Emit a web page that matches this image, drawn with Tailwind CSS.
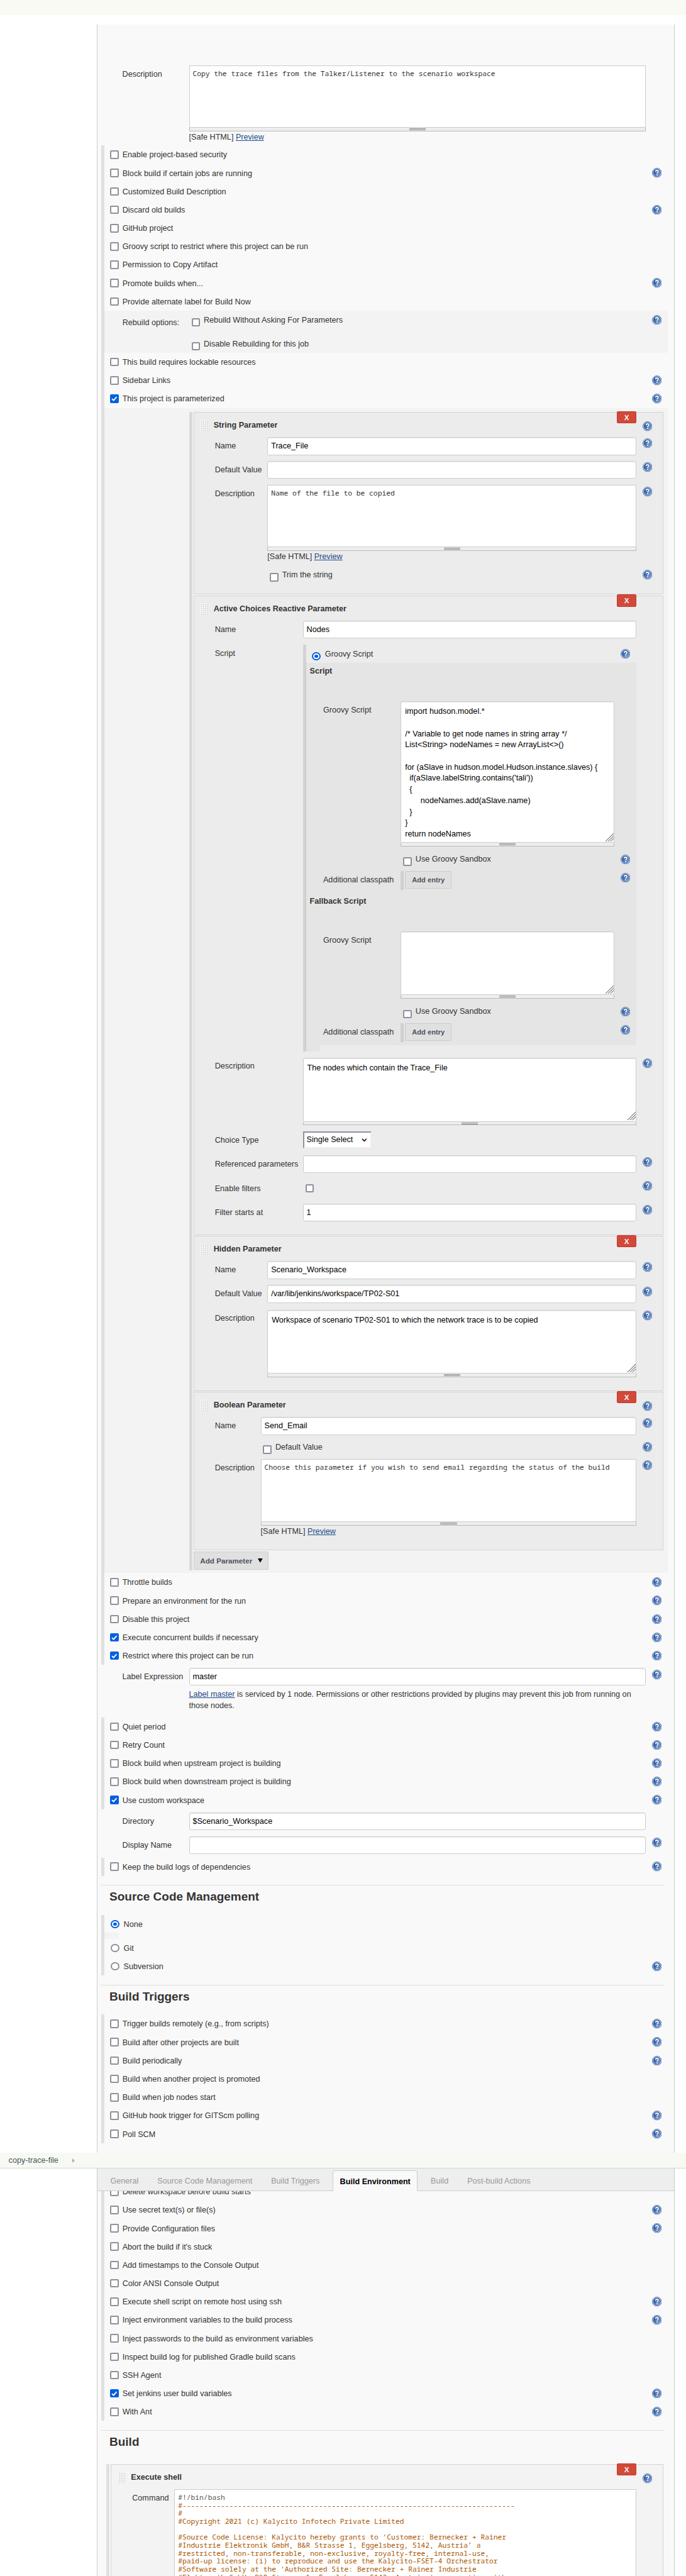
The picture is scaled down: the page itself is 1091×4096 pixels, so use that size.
<!DOCTYPE html>
<html lang="en">
<head>
<meta charset="utf-8">
<title>copy-trace-file Config</title>
<script src="https://cdn.jsdelivr.net/npm/@tailwindcss/browser@4"></script>
</head>
<body class="bg-white">
<svg class="absolute size-0">
  <defs>
    <linearGradient id="hg" x1="0" y1="0" x2="1" y2="1"><stop offset="0.1" stop-color="#24509a"/><stop offset="1" stop-color="#86a9da"/></linearGradient>
    <symbol id="help" viewBox="0 0 16 16">
      <circle cx="8" cy="8" r="7.5" fill="#fff" stroke="#3f68a6" stroke-width="1"/>
      <circle cx="8" cy="8" r="6.1" fill="url(#hg)" stroke="#2f5a9c" stroke-width="0.6"/>
      <path d="M5.9 6.1C5.9 4.7 6.8 4 8 4s2.1.8 2.1 1.9c0 1.5-1.9 1.7-1.9 3.4" fill="none" stroke="#fff" stroke-width="1.6"/>
      <rect x="7.3" y="10.5" width="1.8" height="1.7" fill="#fff"/>
    </symbol>
    <symbol id="tick" viewBox="0 0 14 14"><path d="M3.2 7.3l2.6 2.6 5-5.7" fill="none" stroke="#fff" stroke-width="1.9"/></symbol>
    <symbol id="resize" viewBox="0 0 15 15"><path d="M1 14.5L14.500 1M5 14.500L14.500 5M9 14.500L14.500 9" stroke="#777" stroke-width="1.100"/></symbol>
    <pattern id="dots" width="3" height="3" patternUnits="userSpaceOnUse"><rect width="3" height="3" fill="#fbfbfb"/><rect x="1" y="1" width="1.500" height="1.500" fill="#bcbcb6"/></pattern>
    <symbol id="grip" viewBox="0 0 12 18"><rect width="12" height="18" fill="url(#dots)"/></symbol>
  </defs>
</svg>
<div class="w-[1091px] h-[4096px] overflow-hidden">
  <div id="page" class="[zoom:0.9726] h-[4213px] flex flex-col font-['Liberation_Sans',Arial,sans-serif] text-[13px] leading-[18px] text-[#333]"></div>
</div>
<script>
const help = (mt = 'mt-[7px]') => `<svg class="size-4 shrink-0 ${mt}"><use href="#help"/></svg>`;
const box = (on, mt = '') => on
  ? `<svg class="size-[14px] shrink-0 rounded-[2px] bg-[#0060df] ${mt}"><use href="#tick"/></svg>`
  : `<div class="size-[14px] shrink-0 rounded-[2px] border-[2.1px] border-[#8f8f9d] bg-white ${mt}"></div>`;
const radio = (on, mt = '') => on
  ? `<div class="size-[14px] shrink-0 rounded-full border-[2.1px] border-[#0060df] bg-white p-[2px] ${mt}"><div class="size-full rounded-full bg-[#0060df]"></div></div>`
  : `<div class="size-[14px] shrink-0 rounded-full border-[2.1px] border-[#8f8f9d] bg-white ${mt}"></div>`;

// One 30px option row of the configuration form
const opt = (text, h = 0, on = 0) => `<div class="flex h-[30px] pl-[9px] pr-5">${box(on, 'mt-2')}<span class="ml-[6px] flex-1 leading-[31px]">${text}</span>${h ? help() : ''}</div>`;
const rad = (text, h = 0, on = 0) => `<div class="flex h-[30px] pl-[10px] pr-5">${radio(on, 'mt-2')}<span class="ml-[7px] flex-1 leading-[31px]">${text}</span>${h ? help() : ''}</div>`;
const group = (inner) => `<div class="ml-[7px] border-l-[5.15px] border-[#e0e0e0]">${inner}</div>`;

const input = (v = '') => `<div class="h-[29px] rounded-[3px] border border-[#ccc] bg-white px-[5px] leading-[28px] text-black shadow-[inset_0_1px_1px_rgba(0,0,0,0.08)]">${v}</div>`;
const handle = `<div class="flex h-[6px] flex-col items-center gap-px border border-t-0 border-[#bbb] bg-[#eee] pt-px"><div class="h-px w-[27px] bg-[#85857d]"></div><div class="h-px w-[27px] bg-[#85857d]"></div></div>`;
const mono = "font-['Noto_Sans_Mono','DejaVu_Sans_Mono',monospace] text-[11.63px] whitespace-pre";
const editor = (v) => `<div class="h-[102px] border border-[#ccc] bg-white px-[5px] pt-[6px] leading-[13px] ${mono}">${v}</div>${handle}`;
const area = (h, v = '') => `<div class="relative ${h} rounded-[3px] border border-[#ccc] bg-white px-[6px] pt-[7px] leading-[18.2px] whitespace-pre text-black shadow-[inset_0_1px_1px_rgba(0,0,0,0.08)]">${v}<svg class="absolute right-0 bottom-px size-[15px]"><use href="#resize"/></svg></div>${handle}`;
const safe = `<div class="h-5 leading-[20px]">[Safe HTML] <span class="text-[#204a87] underline">Preview</span></div>`;
const inlineCheck = (text, bm, tm, on) => `<div class="flex items-start pl-1">${box(on, bm)}<span class="ml-[6px] ${tm}">${text}</span></div>`;

const field = ({ h, pad = 'pl-[34px] pr-[17px]', lw, label = '', lh = 'leading-[29px]', ctrl, hm }) =>
  `<div class="flex items-start ${h} ${pad}"><div class="${lw} ${lh} shrink-0 whitespace-nowrap">${label}</div><div class="min-w-0 flex-1">${ctrl}</div><div class="ml-[10px] flex w-4 shrink-0">${hm ? help(hm) : ''}</div></div>`;

const card = (h, bg, title, hasHelp, inner) => `<div class="relative ${h} ${bg} border border-[#d3d3d3]">
  <div class="absolute right-[43px] -top-[3px] h-5 w-8 rounded-[2px] border border-[#c0392b] bg-[#d24939] text-center text-[12px] leading-[18px] font-bold text-[#f4f4f4]">X</div>
  <div class="flex h-10 items-start pl-[11px] pr-[17px]"><svg class="mt-3 h-[18px] w-3"><use href="#grip"/></svg><b class="ml-[9px] mt-3 flex-1">${title}</b>${hasHelp ? help('mt-[14px]') : ''}</div>
  ${inner}</div>`;

const button = (text) => `<div class="h-[29px] w-[76px] rounded-[2px] border border-[#ccc] bg-[#e0e0e0] text-center text-[11.5px] leading-[28px] font-bold whitespace-nowrap text-[#4d545d]">${text}</div>`;
const classpath = field({ h: 'h-9', pad: 'pl-[30px] pr-[10px]', lw: 'w-[127px]', label: 'Additional classpath', hm: 'mt-[3px]',
  ctrl: `<div class="flex items-start gap-[2px]"><div class="h-[31px] w-[5px] bg-[#cfcfcf]"></div>${button('Add entry')}</div>` });
const sandbox = field({ h: 'h-10', pad: 'pl-[30px] pr-[10px]', lw: 'w-[127px]', ctrl: inlineCheck('Use Groovy Sandbox', 'mt-[18px]', 'mt-3'), hm: 'mt-[13px]' });
const scriptBlock = (title, h, ah, text) => `<div class="h-[63px] pl-2 pt-[5px] font-bold">${title}</div>` +
  field({ h, pad: 'pl-[30px] pr-[10px]', lw: 'w-[127px]', label: 'Groovy Script', ctrl: area(ah, text) }) + sandbox + classpath;

const groovy = `import hudson.model.*

/* Variable to get node names in string array */
List&lt;String&gt; nodeNames = new ArrayList&lt;&gt;()

for (aSlave in hudson.model.Hudson.instance.slaves) {
  if(aSlave.labelString.contains('tali'))
  {
       nodeNames.add(aSlave.name)
  }
}
return nodeNames`;

const A = 'w-[86px]', B = 'w-[144px]', C = 'w-[75px]', P = 'pl-[41px] pr-5', L = 'w-[109px]';
const c1 = card('h-[298px]', 'bg-[#ececec]', 'String Parameter', 1,
  field({ h: 'h-[39px]', lw: A, label: 'Name', ctrl: input('Trace_File'), hm: 'mt-[2px]' }) +
  field({ h: 'h-[39px]', lw: A, label: 'Default Value', ctrl: input(), hm: 'mt-[2px]' }) +
  field({ h: 'h-[128px]', lw: A, label: 'Description', ctrl: editor('Name of the file to be copied') + safe, hm: 'mt-[3px]' }) +
  field({ h: 'h-[40px]', lw: A, ctrl: inlineCheck('Trim the string', 'mt-4', 'mt-[11px]'), hm: 'mt-[11px]' }));
const c2 = card('h-[1045px]', 'bg-[#ececec]', 'Active Choices Reactive Parameter', 0,
  field({ h: 'h-[39px]', lw: B, label: 'Name', ctrl: input('Nodes') }) +
  `<div class="flex h-[676px] items-start pl-[34px] pr-[43px]"><div class="w-[144px] leading-[29px]">Script</div>
    <div class="h-[665px] flex-1 border-l-[5.15px] border-[#d3d3d3]">
      <div class="flex h-[30px] items-start pl-[10px] pr-[10px]">${radio(1, 'mt-3')}<span class="ml-[7px] mt-[7px] flex-1">Groovy Script</span>${help('mt-[7px]')}</div>
      <div class="-ml-[2px] h-[625px] bg-black/[0.027]">${scriptBlock('Script', 'h-[237px]', 'h-[231px]', groovy)}${scriptBlock('Fallback Script', 'h-[110px]', 'h-[104px]', '')}</div>
      <div class="-ml-[2px] h-[10px] w-[25px] bg-black/[0.027]"></div>
    </div></div>` +
  field({ h: 'h-[120px]', lw: B, lh: 'leading-[28px]', label: 'Description', ctrl: area('h-[104px]', 'The nodes which contain the Trace_File'), hm: 'mt-px' }) +
  field({ h: 'h-[39px]', lw: B, label: 'Choice Type', ctrl: `<div class="flex h-7 w-28 items-center justify-between border-[2.1px] border-t-[#8f8f9d] border-l-[#8f8f9d] border-r-[#ededf0] border-b-[#ededf0] bg-white pl-1 pr-[5px] text-black">Single Select<svg class="h-[6px] w-[9px]" viewBox="0 0 9 6"><path d="M1 .8l3.500 3.800L8 .8" fill="none" stroke="#000" stroke-width="1.600"/></svg></div>` }) +
  field({ h: 'h-10', lw: B, label: 'Referenced parameters', ctrl: input(), hm: 'mt-[3px]' }) +
  field({ h: 'h-[39px]', lw: B, label: 'Enable filters', ctrl: inlineCheck('', 'mt-[7px]', ''), hm: 'mt-[2px]' }) +
  field({ h: 'h-[39px]', lw: B, label: 'Filter starts at', ctrl: input('1'), hm: 'mt-[2px]' }));
const c3 = card('h-[253px]', 'bg-[#ececec]', 'Hidden Parameter', 0,
  field({ h: 'h-[39px]', lw: A, label: 'Name', ctrl: input('Scenario_Workspace'), hm: 'mt-[2px]' }) +
  field({ h: 'h-[41px]', lw: A, label: 'Default Value', ctrl: input('/var/lib/jenkins/workspace/TP02-S01'), hm: 'mt-[3px]' }) +
  field({ h: 'h-[110px]', lw: A, label: 'Description', lh: 'leading-[28px]', ctrl: area('h-[104px]', 'Workspace of scenario TP02-S01 to which the network trace is to be copied'), hm: 'mt-px' }));
const c4 = card('h-[259px]', 'bg-[#ececec]', 'Boolean Parameter', 1,
  field({ h: 'h-[29px]', lw: C, label: 'Name', ctrl: input('Send_Email'), hm: 'mt-[2px]' }) +
  field({ h: 'h-10', lw: C, ctrl: inlineCheck('Default Value', 'mt-[17px]', 'mt-3'), hm: 'mt-3' }) +
  field({ h: 'h-[128px]', lw: C, label: 'Description', ctrl: editor('Choose this parameter if you wish to send email regarding the status of the build') + safe, hm: 'mt-[2px]' }));

const heading = (t, h) => `<div class="mt-[15px] ml-[5px] mr-[15px] h-px shrink-0 bg-[#ddd]"></div><div class="${h} pl-5 text-[19.5px] leading-[38px] font-bold">${t}</div>`;

const shell = `#------------------------------------------------------------------------------
#
#Copyright 2021 (c) Kalycito Infotech Private Limited

#Source Code License: Kalycito hereby grants to ‘Customer: Bernecker + Rainer
#Industrie Elektronik GmbH, B&amp;R Strasse 1, Eggelsberg, 5142, Austria’ a
#restricted, non-transferable, non-exclusive, royalty-free, internal-use,
#paid-up license: (i) to reproduce and use the Kalycito-FSET-4 Orchestrator
#Software solely at the ‘Authorized Site: Bernecker + Rainer Industrie
#Elektronik GmbH, B&amp;R Strasse 1, Eggelsberg, 5142, Austria in connection with`;

const tab = (t) => `<span class="px-[15.4px] pt-[3px] leading-[36px]">${t}</span>`;

document.getElementById('page').innerHTML = `
<header class="h-[25px] shrink-0 bg-[#f8faf3]"></header>
<section class="mt-[15px] ml-[158px] mr-[19px] h-[3479px] shrink-0 border-x border-[#ccc] bg-[#f9f9f9] pt-[67px]">
  ${field({ h: 'h-[131px]', pad: P, lw: L, label: 'Description', ctrl: editor('Copy the trace files from the Talker/Listener to the scenario workspace') + safe })}
  ${group(opt('Enable project-based security') + opt('Block build if certain jobs are running', 1) + opt('Customized Build Description') + opt('Discard old builds', 1) + opt('GitHub project') + opt('Groovy script to restrict where this project can be run') + opt('Permission to Copy Artifact') + opt('Promote builds when...', 1) + opt('Provide alternate label for Build Now') + `
    <div class="-ml-[2px] mr-[10px] flex h-[69px] items-start bg-black/[0.025] pl-[31px] pr-[10px]">
      <div class="w-[109px] pt-[11px]">Rebuild options:</div>
      <div class="flex-1"><div class="h-[39px]">${inlineCheck('Rebuild Without Asking For Parameters', 'mt-3', 'mt-[7px]')}</div>${inlineCheck('Disable Rebuilding for this job', 'mt-3', 'mt-[7px]')}</div>${help()}
    </div>` + opt('This build requires lockable resources') + opt('Sidebar Links', 1) + opt('This project is parameterized', 1, 1) + `
    <div class="-ml-[2px] mr-[10px] h-[1905px] bg-black/[0.025] pl-[140px] pr-[7px] pt-[7px]">
      <div class="flex h-[1893px] flex-col gap-[2px] border-l-[5.15px] border-[#d9d9d9] pl-[2px]">${c1}${c2}${c3}${c4}
        <div class="flex h-[29px] w-[123px] items-center gap-[9px] rounded-[2px] border border-[#ccc] bg-[#e0e0e0] pl-[10px] text-[12px] font-bold text-[#4d545d]">Add Parameter<svg class="h-[7px] w-2" viewBox="0 0 8 7"><path d="M0 0h8L4 7z"/></svg></div>
      </div>
    </div>` + opt('Throttle builds', 1) + opt('Prepare an environment for the run', 1) + opt('Disable this project', 1) + opt('Execute concurrent builds if necessary', 1, 1) + opt('Restrict where this project can be run', 1, 1))}
  <div class="h-[86px] pt-[5px]">${field({ h: '', pad: P, lw: L, label: 'Label Expression', hm: 'mt-[3px]', ctrl: input('master') + `<div class="mt-[6px]"><span class="text-[#204a87] underline">Label master</span> is serviced by 1 node. Permissions or other restrictions provided by plugins may prevent this job from running on those nodes.</div>` })}</div>
  ${group(opt('Quiet period', 1) + opt('Retry Count', 1) + opt('Block build when upstream project is building', 1) + opt('Block build when downstream project is building', 1) + opt('Use custom workspace', 1, 1))}
  <div class="h-[79px] pt-[5px]">${field({ h: 'h-[39px]', pad: P, lw: L, label: 'Directory', ctrl: input('$Scenario_Workspace') })}${field({ h: '', pad: P, lw: L, label: 'Display Name', ctrl: input(), hm: 'mt-[2px]' })}</div>
  ${group(opt('Keep the build logs of dependencies', 1))}
  ${heading('Source Code Management', 'h-12')}
  ${group(`<div class="h-[29px]">${rad('None', 0, 1)}</div><div class="-ml-[2px] h-[10px] w-[25px] bg-black/[0.025]"></div>` + rad('Git') + rad('Subversion', 1))}
  ${heading('Build Triggers', 'h-12')}
  ${group(opt('Trigger builds remotely (e.g., from scripts)', 1) + opt('Build after other projects are built', 1) + opt('Build periodically', 1) + opt('Build when another project is promoted') + opt('Build when job nodes start') + opt('GitHub hook trigger for GITScm polling', 1) + opt('Poll SCM', 1))}
</section>
<nav class="flex h-[26px] shrink-0 items-center border-b border-[#d3d7cf] bg-[#f6faf2] pl-[14px] pt-[3px] text-[#4d545d]">copy-trace-file<svg class="ml-[23px] -mt-[2px] h-[7px] w-1" viewBox="0 0 4 7"><path d="M0 0l4 3.500L0 7z" fill="#aaa"/></svg></nav>
<section class="ml-[158px] mr-[19px] flex-1 border-x border-[#ccc] bg-[#f9f9f9]">
  <div class="flex h-[37px] border-b border-[#ccc] bg-[#eee] pl-[6px] text-[#999]">
    ${tab('General')}${tab('Source Code Management')}${tab('Build Triggers')}<span class="ml-[6px] mt-[3px] mr-[6px] h-[34px] w-[139px] rounded-t-[4px] border border-b-0 border-[#ccc] bg-[#f9f9f9] text-center leading-[35px] font-bold text-black">Build Environment</span>${tab('Build')}${tab('Post-build Actions')}
  </div>
  <div class="flex h-4 flex-col justify-end overflow-hidden">${group(opt('Delete workspace before build starts'))}</div>
  ${group(opt('Use secret text(s) or file(s)', 1) + opt('Provide Configuration files', 1) + opt("Abort the build if it's stuck") + opt('Add timestamps to the Console Output') + opt('Color ANSI Console Output') + opt('Execute shell script on remote host using ssh', 1) + opt('Inject environment variables to the build process', 1) + opt('Inject passwords to the build as environment variables') + opt('Inspect build log for published Gradle build scans') + opt('SSH Agent') + opt('Set jenkins user build variables', 1, 1) + opt('With Ant', 1))}
  ${heading('Build', 'h-[55px]')}
  <div class="ml-[15px] mr-[17px] border-l-[5.15px] border-[#e0e0e0] pl-[2px]">
    ${card('h-[190px]', 'bg-[#f3f3f3]', 'Execute shell', 1, `<div class="flex items-start pl-[34px] pr-[43px]"><div class="w-[69px] leading-[29px]">Command</div><div class="h-[150px] flex-1 border border-[#ccc] bg-white px-[5px] pt-[6px] leading-[13px] ${mono} text-[#a50]"><span class="text-[#555]">#!/bin/bash</span>\n${shell}</div></div>`)}
  </div>
</section>`;
</script>
</body>
</html>
